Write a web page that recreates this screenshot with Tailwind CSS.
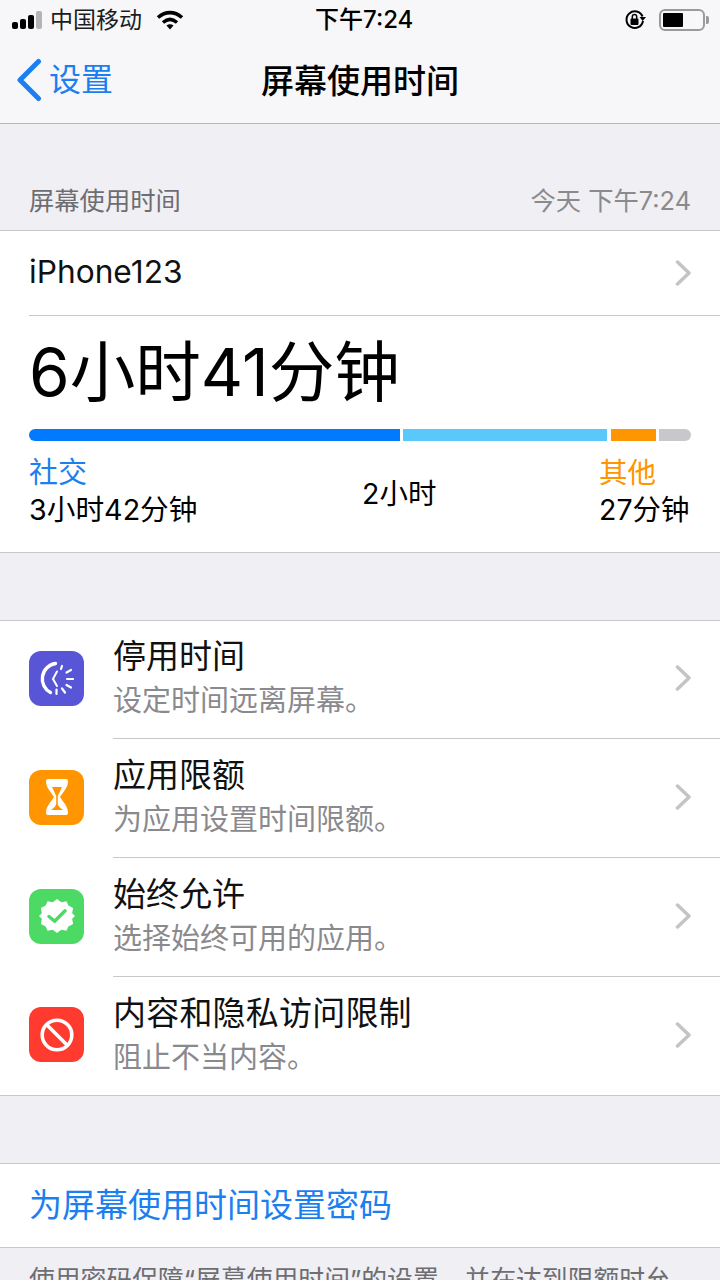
<!DOCTYPE html>
<html lang="zh-CN">
<head>
  <meta charset="UTF-8" />
  <title>屏幕使用时间</title>
  <script src="https://cdn.jsdelivr.net/npm/@tailwindcss/browser@4"></script>
</head>
<body class="bg-[#efeff4] font-['Inter','Noto_Sans_CJK_SC',sans-serif] text-black">
  <div class="w-[720px] h-[1280px] overflow-hidden flex flex-col">

    <!-- status + nav bar -->
    <div class="h-[124px] shrink-0 bg-[#f7f7f9] border-b border-[#b9b9bd]">
      <div class="h-[40px] relative flex items-center justify-between pl-[12px] pr-[11px]">
        <div class="flex items-center">
          <div class="flex items-end gap-[2px] w-[32px] h-[18px]">
            <span class="w-[6px] h-[7px] bg-black rounded-[2px]"></span>
            <span class="w-[6px] h-[10px] bg-black rounded-[2px]"></span>
            <span class="w-[6px] h-[14px] bg-black rounded-[2px]"></span>
            <span class="w-[6px] h-[18px] bg-[#b4b4b6] rounded-[2px]"></span>
          </div>
          <span class="ml-[6px] text-[23px] text-[#1c1c1e] leading-none">中国移动</span>
          <svg class="ml-[14px]" width="28" height="20" viewBox="0 0 28 20">
            <path d="M2 7.500C9.500 1 18.500 1 26 7.500" fill="none" stroke="#000" stroke-width="3.600" />
            <path d="M7 12.500C11.500 8.500 16.500 8.500 21 12.500" fill="none" stroke="#000" stroke-width="3.400" />
            <path d="M10.500 15.500C12.500 13.800 15.500 13.800 17.500 15.500L14 19.500Z" fill="#000" />
          </svg>
        </div>
        <span class="absolute left-[315px] top-[6px] text-[24px] leading-[28px] font-medium">下午7:24</span>
        <div class="flex items-center">
          <svg width="22" height="22" viewBox="0 0 22 22">
            <path d="M18.500 7.500A8.300 8.300 0 1 0 19 12" fill="none" stroke="#000" stroke-width="2" />
            <path d="M15.500 8H22L18.700 12Z" fill="#000" />
            <rect x="6.500" y="9.500" width="8" height="6.500" rx="1" fill="#000" />
            <path d="M8.300 10V7.800a2.200 2.200 0 0 1 4.400 0V10" fill="none" stroke="#000" stroke-width="1.500" />
          </svg>
          <div class="ml-[13px] w-[46px] h-[22px] border-2 border-[#9a9a9c] rounded-[6px] p-[2px]">
            <div class="w-[20px] h-full bg-black rounded-[1px]"></div>
          </div>
          <span class="ml-[1px] w-[3px] h-[8px] bg-[#9a9a9c] rounded-r-[2px]"></span>
        </div>
      </div>
      <div class="h-[83px] relative flex items-center justify-center">
        <div class="absolute left-[16px] top-[18px] flex items-center">
          <svg width="26" height="44" viewBox="0 0 26 44">
            <path d="M22.500 3.500L4 22L22.500 40.500" fill="none" stroke="#1c7ff0" stroke-width="5" stroke-linecap="round" stroke-linejoin="round" />
          </svg>
          <span class="ml-[7px] text-[32px] leading-none text-[#1c7ff0]">设置</span>
        </div>
        <span class="text-[33px] font-medium leading-none">屏幕使用时间</span>
      </div>
    </div>

    <!-- section header -->
    <div class="h-[107px] shrink-0 flex items-end justify-between px-[29px] pb-[14px] text-[25.300px] leading-[30px] text-[#6d6d72] border-b border-[#c8c7cc]">
      <span>屏幕使用时间</span>
      <span class="text-[#8a8a8e]">今天 下午7:24</span>
    </div>

    <!-- usage card -->
    <div class="h-[322px] shrink-0 bg-white border-b border-[#c8c7cc]">
      <div class="ml-[29px] h-[85px] flex items-center justify-between border-b border-[#c8c7cc] pr-[29px]">
        <span class="text-[31.700px] leading-none text-[#111] pb-[2px]">iPhone123</span>
        <svg width="16" height="26" viewBox="0 0 16 26"><path d="M2.500 2L14 13L2.500 24" fill="none" stroke="#c4c4c7" stroke-width="3.500" stroke-linecap="round" stroke-linejoin="round" /></svg>
      </div>
      <div class="px-[29px]">
        <div class="h-[113px] flex items-center text-[65.600px] leading-none">6小时41分钟</div>
        <div class="flex gap-[3px] h-[12px] w-[662px]">
          <div class="w-[372px] bg-[#007aff] rounded-l-[6px]"></div>
          <div class="w-[204px] bg-[#5ac8fa]"></div>
          <div class="w-[45px] bg-[#ff9500] ml-[1px]"></div>
          <div class="w-[32px] bg-[#c7c7cc] rounded-r-[6px]"></div>
        </div>
        <div class="relative h-[99px]">
          <div class="absolute left-0 top-[15px] text-[29px] leading-[34px] text-[#1c7ff0]">社交</div>
          <div class="absolute left-0 top-[52px] text-[28.700px] leading-[34px] whitespace-nowrap">3小时42分钟</div>
          <div class="absolute left-[333px] top-[36px] text-[28.500px] leading-[34px] whitespace-nowrap">2小时</div>
          <div class="absolute left-[570px] top-[15px] text-[28.500px] leading-[34px] text-[#ff9500]">其他</div>
          <div class="absolute left-[570px] top-[52px] text-[28.500px] leading-[34px] whitespace-nowrap">27分钟</div>
        </div>
      </div>
    </div>

    <div class="h-[67px] shrink-0"></div>

    <!-- menu list -->
    <div class="shrink-0 bg-white border-y border-[#c8c7cc]">
      <div class="flex h-[118px] items-stretch">
        <div class="w-[113px] shrink-0 flex items-center pl-[29px] pb-[3px]">
          <div class="w-[55px] h-[55px] rounded-[12px] bg-[#5856d6] flex items-center justify-center">
            <svg width="40" height="40" viewBox="0 0 40 40" fill="none" stroke="#fff" stroke-linecap="round">
              <path d="M18.500 4.500A15.500 15.500 0 0 0 13.500 33.500" stroke-width="3.400" />
              <path d="M20 12.500L16 20L20 27" stroke-width="2" />
              <path d="M25 7L24 10M34 11L29.500 13.500M36 20H30M34 28.500L29.500 26M28 33.500L25 29.500M19.500 35V30.500" stroke-width="2.200" />
            </svg>
          </div>
        </div>
        <div class="flex-1 flex justify-between items-center border-b border-[#c8c7cc] pr-[29px] pb-[3px]">
          <div class="pb-[2px]">
            <div class="text-[33px] leading-[38px] text-[#111]">停用时间</div>
            <div class="text-[29px] leading-[34px] mt-[9px] text-[#8a8a8e]">设定时间远离屏幕。</div>
          </div>
          <svg width="16" height="26" viewBox="0 0 16 26"><path d="M2.500 2L14 13L2.500 24" fill="none" stroke="#c4c4c7" stroke-width="3.500" stroke-linecap="round" stroke-linejoin="round" /></svg>
        </div>
      </div>
      <div class="flex h-[119px] items-stretch">
        <div class="w-[113px] shrink-0 flex items-center pl-[29px] pb-[3px]">
          <div class="w-[55px] h-[55px] rounded-[12px] bg-[#ff9500] flex items-center justify-center">
            <svg width="24" height="36" viewBox="0 0 24 36">
              <path d="M3 0H21Q23 0 23 2C23 9 18 13 15 18C18 23 23 27 23 34Q23 36 21 36H3Q1 36 1 34C1 27 6 23 9 18C6 13 1 9 1 2Q1 0 3 0Z" fill="#fff" />
              <path d="M7 8H17L12.800 17V25C13.500 28 16 29.500 18 31H6C8 29.500 10.500 28 11.200 25V17Z" fill="#ff9500" />
            </svg>
          </div>
        </div>
        <div class="flex-1 flex justify-between items-center border-b border-[#c8c7cc] pr-[29px] pb-[3px]">
          <div>
            <div class="text-[33px] leading-[38px] text-[#111]">应用限额</div>
            <div class="text-[29px] leading-[34px] mt-[9px] text-[#8a8a8e]">为应用设置时间限额。</div>
          </div>
          <svg width="16" height="26" viewBox="0 0 16 26"><path d="M2.500 2L14 13L2.500 24" fill="none" stroke="#c4c4c7" stroke-width="3.500" stroke-linecap="round" stroke-linejoin="round" /></svg>
        </div>
      </div>
      <div class="flex h-[119px] items-stretch">
        <div class="w-[113px] shrink-0 flex items-center pl-[29px] pb-[3px]">
          <div class="w-[55px] h-[55px] rounded-[12px] bg-[#4cd964] flex items-center justify-center">
            <svg width="36" height="36" viewBox="0 0 38 38">
              <path d="M19 1L23.500 4.500L29 3.500L31 8L36 10.500L35 16L38 19L35 22L36 27.500L31 30L29 34.500L23.500 33.500L19 37L14.500 33.500L9 34.500L7 30L2 27.500L3 22L0 19L3 16L2 10.500L7 8L9 3.500L14.500 4.500Z" fill="#fff" />
              <path d="M10.500 19.500L16.500 24.500L27.500 13.500" fill="none" stroke="#4cd964" stroke-width="3.600" stroke-linecap="round" stroke-linejoin="round" />
            </svg>
          </div>
        </div>
        <div class="flex-1 flex justify-between items-center border-b border-[#c8c7cc] pr-[29px] pb-[3px]">
          <div>
            <div class="text-[33px] leading-[38px] text-[#111]">始终允许</div>
            <div class="text-[29px] leading-[34px] mt-[9px] text-[#8a8a8e]">选择始终可用的应用。</div>
          </div>
          <svg width="16" height="26" viewBox="0 0 16 26"><path d="M2.500 2L14 13L2.500 24" fill="none" stroke="#c4c4c7" stroke-width="3.500" stroke-linecap="round" stroke-linejoin="round" /></svg>
        </div>
      </div>
      <div class="flex h-[118px] items-stretch">
        <div class="w-[113px] shrink-0 flex items-center pl-[29px] pb-[3px]">
          <div class="w-[55px] h-[55px] rounded-[12px] bg-[#ff3b30] flex items-center justify-center">
            <svg width="34" height="34" viewBox="0 0 34 34" fill="none" stroke="#fff" stroke-width="3.600">
              <circle cx="17" cy="17" r="14.800" />
              <path d="M7 7L27 27" />
            </svg>
          </div>
        </div>
        <div class="flex-1 flex justify-between items-center pr-[29px] pb-[3px]">
          <div>
            <div class="text-[33px] leading-[38px] text-[#111] tracking-[0.2px]">内容和隐私访问限制</div>
            <div class="text-[29px] leading-[34px] mt-[9px] text-[#8a8a8e]">阻止不当内容。</div>
          </div>
          <svg width="16" height="26" viewBox="0 0 16 26"><path d="M2.500 2L14 13L2.500 24" fill="none" stroke="#c4c4c7" stroke-width="3.500" stroke-linecap="round" stroke-linejoin="round" /></svg>
        </div>
      </div>
    </div>

    <div class="h-[67px] shrink-0"></div>

    <!-- passcode -->
    <div class="h-[85px] shrink-0 bg-white border-y border-[#c8c7cc] flex items-center px-[29px]">
      <span class="text-[33px] leading-none text-[#1c7ff0]">为屏幕使用时间设置密码</span>
    </div>
    <div class="px-[29px] pt-[16px] text-[25.800px] leading-[32px] text-[#6d6d72]">使用密码保障“屏幕使用时间”的设置，并在达到限额时允许延长时间。</div>
  </div>
</body>
</html>
